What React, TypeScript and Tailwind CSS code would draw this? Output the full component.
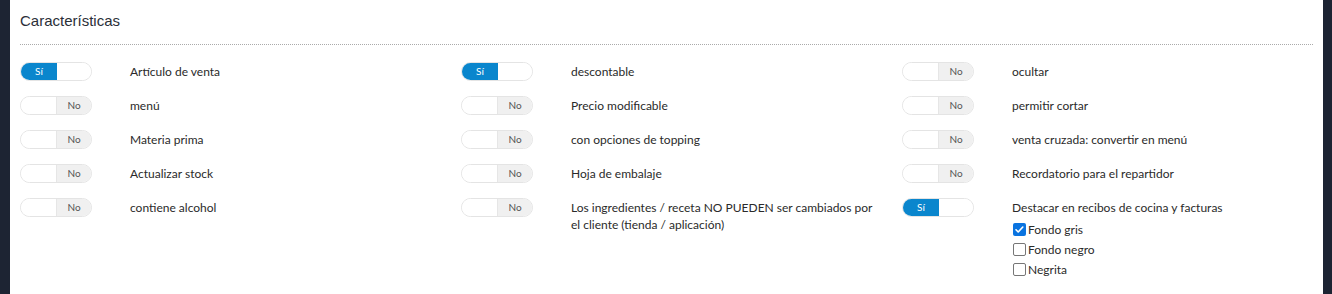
import { useState } from 'react';

type Item = { label: string; on: boolean };

const columns: Item[][] = [
  [
    { label: 'Artículo de venta', on: true },
    { label: 'menú', on: false },
    { label: 'Materia prima', on: false },
    { label: 'Actualizar stock', on: false },
    { label: 'contiene alcohol', on: false },
  ],
  [
    { label: 'descontable', on: true },
    { label: 'Precio modificable', on: false },
    { label: 'con opciones de topping', on: false },
    { label: 'Hoja de embalaje', on: false },
    {
      label:
        'Los ingredientes / receta NO PUEDEN ser cambiados por el cliente (tienda / aplicación)',
      on: false,
    },
  ],
  [
    { label: 'ocultar', on: false },
    { label: 'permitir cortar', on: false },
    { label: 'venta cruzada: convertir en menú', on: false },
    { label: 'Recordatorio para el repartidor', on: false },
    { label: 'Destacar en recibos de cocina y facturas', on: true },
  ],
];

function Toggle({ on }: { on: boolean }) {
  return (
    <div className="flex w-[72px] h-[19px] rounded-full border border-[#e4e4e4] overflow-hidden text-[10px] shrink-0">
      {on ? (
        <>
          <div className="w-[36px] bg-[#0a86cd] text-white flex items-center justify-center">Sí</div>
          <div className="flex-1 bg-white"></div>
        </>
      ) : (
        <>
          <div className="w-[35px] bg-white"></div>
          <div className="flex-1 bg-[#f0f0f0] text-[#555] flex items-center justify-center border-l border-[#e6e6e6]">
            No
          </div>
        </>
      )}
    </div>
  );
}

function Check({ checked, label }: { checked: boolean; label: string }) {
  return (
    <label className="flex items-center h-[20px] gap-[2px]">
      {checked ? (
        <span className="w-[13px] h-[13px] rounded-[2px] bg-[#0a74e0] flex items-center justify-center">
          <svg viewBox="0 0 12 12" className="w-[11px] h-[11px]">
            <path d="M2.2 6.3l2.4 2.4 5-5.4" fill="none" stroke="white" strokeWidth={1.8} strokeLinecap="round" strokeLinejoin="round" />
          </svg>
        </span>
      ) : (
        <span className="w-[13px] h-[13px] rounded-[2px] border border-[#767676] bg-white"></span>
      )}
      <span>{label}</span>
    </label>
  );
}

export default function App() {
  const [extra] = useState([
    { label: 'Fondo gris', checked: true },
    { label: 'Fondo negro', checked: false },
    { label: 'Negrita', checked: false },
  ]);

  return (
    <div className="flex w-[1332px] h-[294px] bg-[#1d2433]">
      <div className="ml-[10px] w-[1313px] bg-white pl-[10px] pr-[10px] font-['Lato',sans-serif] text-[12px] text-[#2a2a2a]">
        <h2 className="pt-[10px] h-[34px] text-[15px] text-[#2b2f38] font-['Liberation_Sans','Arial',sans-serif]">
          Características
        </h2>
        <div className="border-t border-dotted border-[#aaa] mt-[10px]"></div>
        <div className="grid grid-cols-3 w-[1323px] pt-[17px]">
          {columns.map((col, ci) => (
            <div key={ci} className="flex flex-col">
              {col.map((item, i) => (
                <div key={i} className="flex items-start min-h-[34px]">
                  <div className="w-[110px]">
                    <Toggle on={item.on} />
                  </div>
                  <div className="w-[310px] leading-[17px] pt-[1px]">
                    {item.label}
                    {ci === 2 && i === 4 && (
                      <div className="mt-[3px] ml-[1px]">
                        {extra.map((c) => (
                          <Check key={c.label} checked={c.checked} label={c.label} />
                        ))}
                      </div>
                    )}
                  </div>
                </div>
              ))}
            </div>
          ))}
        </div>
      </div>
    </div>
  );
}
